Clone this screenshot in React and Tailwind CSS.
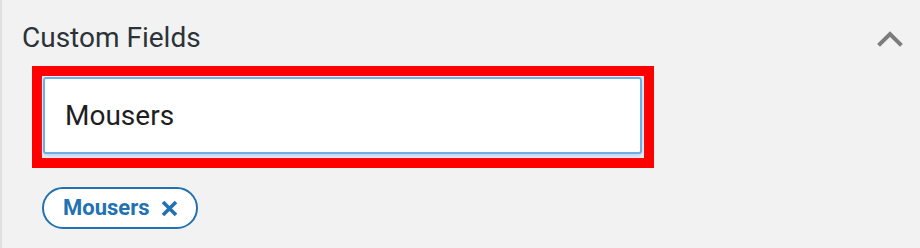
function ChevronUp() {
    return (
        <svg width="28" height="18" viewBox="0 0 28 18" aria-hidden="true">
            <path
                d="M4 15 L14 5 L24 15"
                fill="none"
                stroke="#7c7c7c"
                strokeWidth="4"
                strokeLinecap="square"
            />
        </svg>
    );
}

function CloseIcon() {
    return (
        <svg width="17" height="17" viewBox="0 0 17 17" aria-hidden="true">
            <path
                d="M2 2 L15 15 M15 2 L2 15"
                fill="none"
                stroke="#2271b1"
                strokeWidth="3.6"
            />
        </svg>
    );
}

export default function App() {
    return (
        <div
            className="w-[920px] h-[248px] bg-[#f2f2f2] border-l-2 border-[#e0e0e0] overflow-hidden"
            style={{ fontFamily: "Roboto, 'Liberation Sans', sans-serif" }}
        >
            <div className="flex items-start justify-between pl-[20px] pr-[16px] pt-[24px]">
                <h2 className="text-[28px] leading-none font-normal text-[#2c3338]">
                    Custom Fields
                </h2>
                <div className="mt-[5px]">
                    <ChevronUp />
                </div>
            </div>

            <div className="pl-[30px] mt-[14px]">
                <div className="w-[622px] border-[10px] border-[#ff0000] pt-px pl-px pr-[2px] pb-[4px]">
                    <div className="h-[77px] flex items-center bg-white border-2 border-[#72aee6] rounded-[3px] shadow-[0_2px_4px_rgba(114,174,230,0.5)] pl-[20px]">
                        <span className="text-[28px] leading-none text-[#1e1e1e]">Mousers</span>
                    </div>
                </div>

                <div className="mt-[19px] ml-[10px] inline-flex items-center gap-[11px] h-[42px] border-2 border-[#2271b1] rounded-full bg-white pl-[19px] pr-[18px]">
                    <span className="text-[22px] leading-none font-bold text-[#2271b1]">Mousers</span>
                    <CloseIcon />
                </div>
            </div>
        </div>
    );
}
